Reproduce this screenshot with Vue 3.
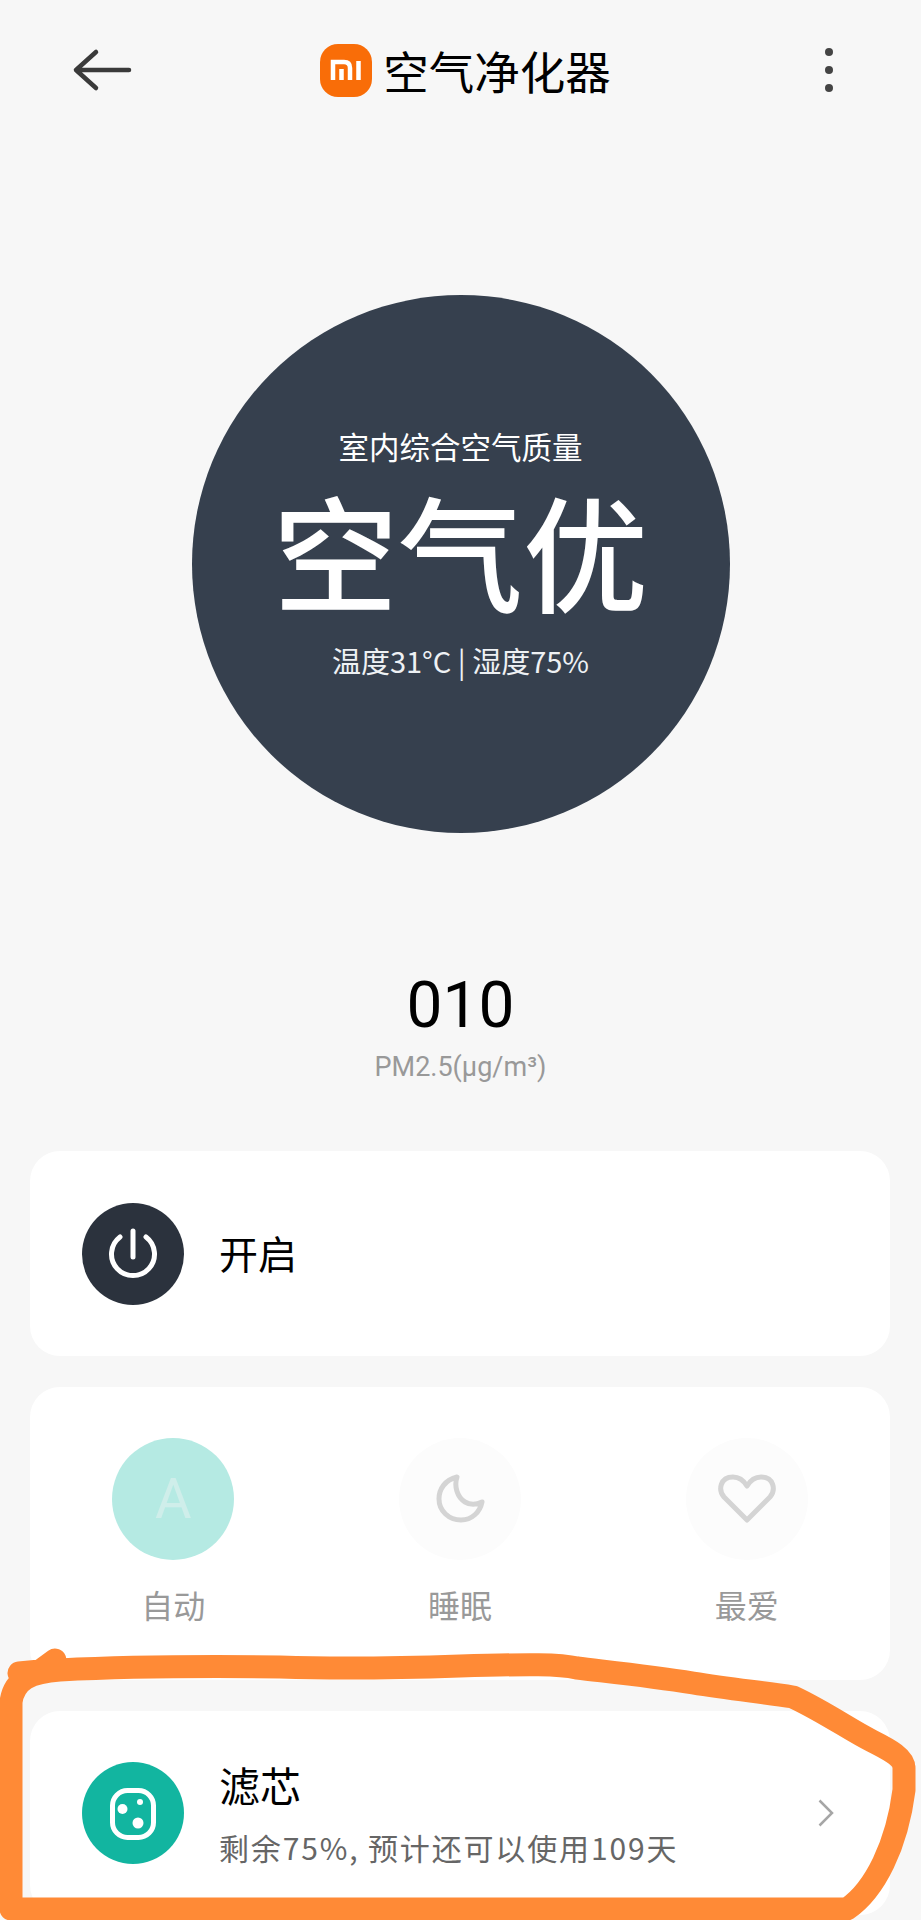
<script setup>
const modes = [
  { key: 'auto', label: '自动' },
  { key: 'sleep', label: '睡眠' },
  { key: 'fav', label: '最爱' }
]
</script>

<template>
  <div class="page">
    <header class="topbar">
      <svg class="back" width="60" height="44" viewBox="0 0 60 44">
        <path d="M24 4 L4 22 L24 40 M4 22 H57" fill="none" stroke="#3a3a3a" stroke-width="4.500" stroke-linecap="round" stroke-linejoin="round" />
      </svg>
      <div class="title">
        <svg class="logo" width="52" height="53" viewBox="0 0 52 53">
          <rect width="52" height="53" rx="18" fill="#f96d08" />
          <path d="M13 36 V18 H24 Q30 18 30 24 V36 M21.500 25 V36 M38.500 17 V36" fill="none" stroke="#fff" stroke-width="4.500" />
        </svg>
        <span>空气净化器</span>
      </div>
      <div class="more"><i></i><i></i><i></i></div>
    </header>

    <section class="dial">
      <div class="dial-label">室内综合空气质量</div>
      <div class="dial-value">空气优</div>
      <div class="dial-meta">温度31°C | 湿度75%</div>
    </section>

    <section class="reading">
      <div class="reading-value">010</div>
      <div class="reading-unit">PM2.5(μg/m³)</div>
    </section>

    <div class="card power">
      <svg class="round" width="102" height="102" viewBox="0 0 102 102">
        <circle cx="51" cy="51" r="51" fill="#2b323d" />
        <path d="M38 34 A21.500 21.500 0 1 0 64 34" fill="none" stroke="#fff" stroke-width="5" stroke-linecap="round" />
        <path d="M51 28 V54" fill="none" stroke="#fff" stroke-width="5" stroke-linecap="round" />
      </svg>
      <span class="power-text">开启</span>
    </div>

    <div class="card modes">
      <div v-for="m in modes" :key="m.key" class="mode">
        <div class="mode-icon" :class="m.key">
          <span v-if="m.key === 'auto'">A</span>
          <svg v-else-if="m.key === 'sleep'" class="moon" width="50" height="50" viewBox="0 0 50 50">
            <path d="M21 3 C9 6 3 15 3 25 C3 37 13 46 25 46 C36 46 44 38 46 28 C40 31 34 31 29 28 C21 23 18 12 21 3 Z" fill="none" stroke="#d4d4d4" stroke-width="5" stroke-linejoin="round" />
          </svg>
          <svg v-else width="58" height="50" viewBox="0 0 58 50">
            <path d="M29 46 L6 23 C0 16 2 3 15 3 C21 3 26 7 29 12 C32 7 37 3 43 3 C56 3 58 16 52 23 Z" fill="none" stroke="#d4d4d4" stroke-width="5" stroke-linejoin="round" />
          </svg>
        </div>
        <div class="mode-label">{{ m.label }}</div>
      </div>
    </div>

    <div class="card filter">
      <svg class="round" width="102" height="102" viewBox="0 0 102 102">
        <circle cx="51" cy="51" r="51" fill="#12b5a0" />
        <rect x="30.500" y="28.500" width="41" height="47" rx="15" fill="none" stroke="#fff" stroke-width="5" />
        <circle cx="40.500" cy="47" r="5" fill="#fff" />
        <circle cx="58" cy="40" r="3" fill="#fff" />
        <circle cx="56" cy="61" r="5.500" fill="#fff" />
      </svg>
      <div class="filter-text">
        <div class="filter-title">滤芯</div>
        <div class="filter-sub">剩余75%, 预计还可以使用109天</div>
      </div>
      <svg class="chevron" width="16" height="28" viewBox="0 0 16 28">
        <path d="M1.500 1.500 L14 14 L1.500 26.500" fill="none" stroke="#a6a6a6" stroke-width="2.500" />
      </svg>
    </div>

    <!-- hand-drawn marker around the filter card -->
    <svg class="marker" width="921" height="1920" viewBox="0 0 921 1920">
      <path
        d="M19 1673 L40 1671 L55 1660 M904 1768 C904 1758 890 1750 872 1741 C850 1730 825 1712 793 1697 C760 1692 730 1689 693 1683 C650 1676 610 1672 577 1668 C560 1664 530 1664 460 1666 C400 1668 340 1669 280 1667 C200 1666 120 1667 60 1670 C30 1672 14 1680 11 1702 L11 1909 L847 1909 C875 1890 897 1845 904 1790 L904 1768"
        fill="none" stroke="#ff8a36" stroke-width="23" stroke-linecap="round" stroke-linejoin="round"
      />
    </svg>
  </div>
</template>

<style scoped>
.page {
  position: relative;
  width: 921px;
  height: 1920px;
  overflow: hidden;
  background: #f7f7f7;
  font-family: "Noto Sans CJK SC", "Noto Sans", sans-serif;
}
.topbar {
  height: 140px;
  padding: 0 88px 0 72px;
  box-sizing: border-box;
  display: flex;
  align-items: center;
  justify-content: space-between;
}
.title {
  display: flex;
  align-items: center;
  gap: 11px;
  font-size: 45.500px;
  line-height: 60px;
  color: #000;
  margin-left: -26px;
}
.more {
  display: flex;
  flex-direction: column;
  gap: 10px;
}
.more i {
  display: block;
  width: 8px;
  height: 8px;
  border-radius: 50%;
  background: #444;
}
.dial {
  width: 538px;
  height: 538px;
  margin: 155px auto 0;
  padding-top: 131px;
  box-sizing: border-box;
  border-radius: 50%;
  background: #36404e;
  color: #fff;
  text-align: center;
}
.dial-label {
  font-size: 30.500px;
  line-height: 40px;
}
.dial-value {
  margin-top: 27px;
  font-size: 125px;
  font-weight: 500;
  line-height: 112px;
}
.dial-meta {
  margin-top: 35px;
  font-size: 29px;
  line-height: 40px;
  color: #eef1f4;
}
.reading {
  margin-top: 133px;
  text-align: center;
}
.reading-value {
  font-family: Roboto, sans-serif;
  font-size: 64px;
  line-height: 80px;
  color: #000;
}
.reading-unit {
  margin-top: 4px;
  font-family: Roboto, sans-serif;
  font-size: 27px;
  line-height: 34px;
  color: #999;
}
.card {
  margin: 31px 31px 0 30px;
  border-radius: 30px;
  background: #fff;
}
.power {
  margin-top: 67px;
  height: 205px;
  padding-left: 52px;
  display: flex;
  align-items: center;
  gap: 35px;
}
.round {
  flex: none;
}
.power-text {
  padding-bottom: 3px;
  font-size: 39px;
  color: #000;
}
.modes {
  height: 293px;
  padding: 51px 0 0;
  box-sizing: border-box;
  display: grid;
  grid-template-columns: repeat(3, 1fr);
}
.mode {
  display: flex;
  flex-direction: column;
  align-items: center;
}
.mode-icon {
  width: 122px;
  height: 122px;
  border-radius: 50%;
  background: #fcfcfc;
  display: flex;
  align-items: center;
  justify-content: center;
}
.mode-icon.auto {
  background: #b5eae3;
  font-family: Roboto, sans-serif;
  font-size: 56px;
  color: #cfeeea;
}
.moon {
  margin-left: 3px;
}
.mode-label {
  margin-top: 22px;
  font-size: 32px;
  line-height: 44px;
  color: #999;
}
.filter {
  height: 204px;
  padding: 0 56px 0 52px;
  display: flex;
  align-items: center;
  gap: 35px;
}
.filter-text {
  flex: 1;
}
.filter-title {
  font-size: 41px;
  line-height: 50px;
  color: #000;
}
.filter-sub {
  margin-top: 18px;
  font-size: 30px;
  letter-spacing: 1.850px;
  line-height: 40px;
  color: #666;
}
.marker {
  position: absolute;
  left: 0;
  top: 0;
  pointer-events: none;
}
</style>
